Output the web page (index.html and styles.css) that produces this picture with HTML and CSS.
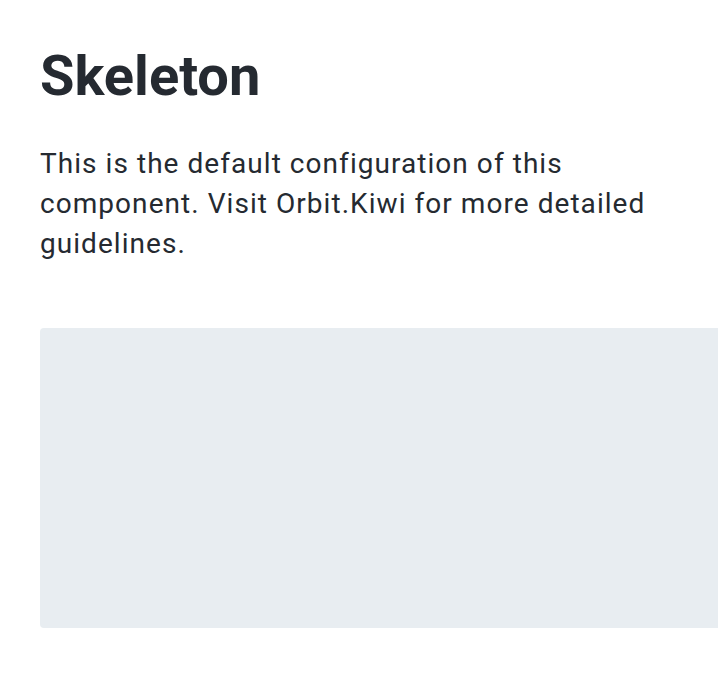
FILE: index.html
```html
<!DOCTYPE html>
<html lang="en">
<head>
<meta charset="utf-8">
<title>Skeleton</title>
<link rel="stylesheet" href="styles.css">
</head>
<body>
<main class="page">
  <h1 class="title">Skeleton</h1>
  <p class="lead">This is the default configuration of this component. Visit Orbit.Kiwi for more detailed guidelines.</p>
  <div class="skeleton"></div>
</main>
</body>
</html>
```
FILE: styles.css
```css
html, body {
  margin: 0;
  padding: 0;
  overflow: hidden;
  background: #ffffff;
}
.page {
  padding: 40px 0 0 40px;
  width: 760px;
  font-family: Roboto, "Liberation Sans", sans-serif;
  color: #252a31;
}
.title {
  margin: 0;
  font-size: 56px;
  font-weight: 700;
  line-height: 72px;
}
.lead {
  margin: 32px 0 0;
  max-width: 640px;
  font-size: 28px;
  line-height: 40px;
  letter-spacing: 1.05px;
}
.skeleton {
  margin-top: 64px;
  height: 300px;
  width: 720px;
  border-radius: 4px;
  background: #e8edf1;
}
```
